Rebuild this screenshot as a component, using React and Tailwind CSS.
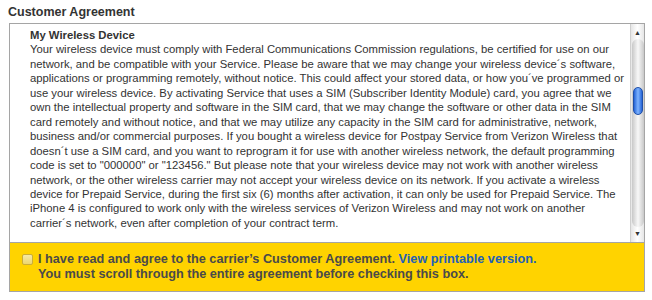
import React from "react";

const lines = [
  "Your wireless device must comply with Federal Communications Commission regulations, be certified for use on our",
  "network, and be compatible with your Service. Please be aware that we may change your wireless device´s software,",
  "applications or programming remotely, without notice. This could affect your stored data, or how you´ve programmed or",
  "use your wireless device. By activating Service that uses a SIM (Subscriber Identity Module) card, you agree that we",
  "own the intellectual property and software in the SIM card, that we may change the software or other data in the SIM",
  "card remotely and without notice, and that we may utilize any capacity in the SIM card for administrative, network,",
  "business and/or commercial purposes. If you bought a wireless device for Postpay Service from Verizon Wireless that",
  "doesn´t use a SIM card, and you want to reprogram it for use with another wireless network, the default programming",
  'code is set to "000000" or "123456." But please note that your wireless device may not work with another wireless',
  "network, or the other wireless carrier may not accept your wireless device on its network. If you activate a wireless",
  "device for Prepaid Service, during the first six (6) months after activation, it can only be used for Prepaid Service. The",
  "iPhone 4 is configured to work only with the wireless services of Verizon Wireless and may not work on another",
  "carrier´s network, even after completion of your contract term.",
];

const ScrollBar = () => {
  return (
    <div className="w-[14px] flex flex-col items-center bg-gradient-to-r from-[#e6e6e6] via-white to-[#e6e6e6] border-l border-[#cfcfcf]">
      <span className="text-[7px] leading-none text-[#333] mt-[5px]">▲</span>
      <div className="flex-1 w-[12px] mt-[3px] mb-[3px] rounded-full bg-gradient-to-r from-[#c8c8c8] via-[#f8f8f8] to-[#c8c8c8] flex flex-col items-center">
        <div className="h-[48px]"></div>
        <div className="w-[10px] h-[28px] rounded-full border border-[#1f4fa8] bg-gradient-to-r from-[#2563d6] via-[#7fb4ff] to-[#2563d6]"></div>
      </div>
      <span className="text-[7px] leading-none text-[#333] mb-[5px]">▼</span>
    </div>
  );
};

export default function App() {
  return (
    <div className="w-[652px] h-[300px] bg-white font-['Liberation_Sans',Arial,sans-serif] text-[#333] pt-[4px]">
      <h2 className="pl-[8px] text-[12.5px] leading-[16px] font-bold text-[#333]">
        Customer Agreement
      </h2>
      <div className="ml-[9px] w-[636px] mt-[3px]">
        <div className="flex h-[220px] border border-[#a5a5a5] overflow-hidden">
          <div className="flex-1 pl-[20px] pt-[4px] text-[11.3px] leading-[14.45px] whitespace-nowrap">
            <p className="font-bold">My Wireless Device</p>
            {lines.map((line, i) => (
              <p key={i}>{line}</p>
            ))}
          </div>
          <ScrollBar />
        </div>
        <div className="h-[49px] bg-[#ffd300] border border-t-0 border-[#a5a5a5] pl-[12px] pt-[9px] flex gap-[5px] text-[12.7px] leading-[15px] font-bold text-[#4a4a4a]">
          <span className="mt-[2px] w-[11px] h-[11px] rounded-[2px] border border-[#c9ad3a] bg-gradient-to-b from-[#f6e9a6] to-[#ecd66e] shrink-0"></span>
          <div>
            <p>
              I have read and agree to the carrier’s Customer Agreement.{" "}
              <a href="#" className="text-[#2360b8]">
                View printable version.
              </a>
            </p>
            <p>You must scroll through the entire agreement before checking this box.</p>
          </div>
        </div>
      </div>
    </div>
  );
}
